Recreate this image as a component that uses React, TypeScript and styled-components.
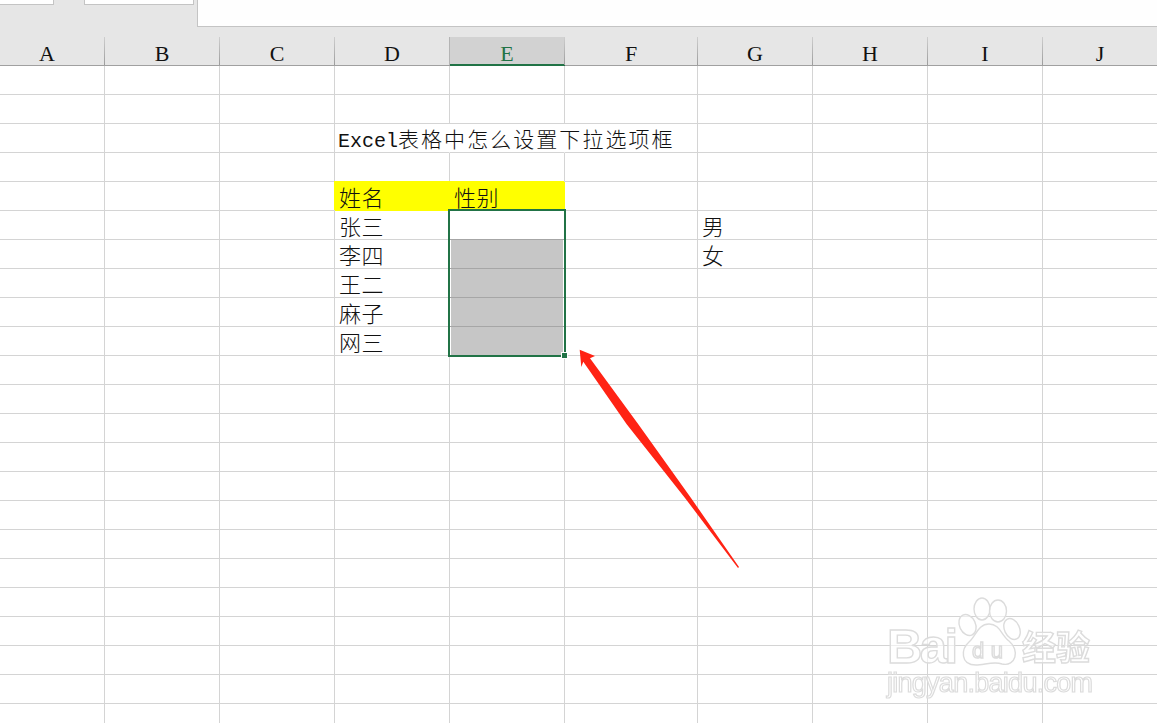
import styled, { createGlobalStyle } from 'styled-components';

const COLUMNS = [
  { label: 'A', width: 115 },
  { label: 'B', width: 115 },
  { label: 'C', width: 115 },
  { label: 'D', width: 115 },
  { label: 'E', width: 115 },
  { label: 'F', width: 133 },
  { label: 'G', width: 115 },
  { label: 'H', width: 115 },
  { label: 'I', width: 115 },
  { label: 'J', width: 115 },
];
const ROW_COUNT = 23;
const GRID_COLUMNS = COLUMNS.map((column) => `${column.width}px`).join(' ');

// keyed by "row:column", both zero based
const CELL_TEXT: Record<string, string> = {
  '4:3': '姓名',
  '4:4': '性别',
  '5:3': '张三',
  '6:3': '李四',
  '7:3': '王二',
  '8:3': '麻子',
  '9:3': '网三',
  '5:6': '男',
  '6:6': '女',
};

type CellTone = 'plain' | 'header' | 'active' | 'selected';

const getTone = (row: number, column: number): CellTone => {
  if (row === 4 && (column === 3 || column === 4)) return 'header';
  if (column === 4 && row === 5) return 'active';
  if (column === 4 && row > 5 && row < 10) return 'selected';
  return 'plain';
};

const App = (): JSX.Element => {
  const cells = [];
  for (let row = 0; row < ROW_COUNT; row++) {
    for (let column = 0; column < COLUMNS.length; column++) {
      const isTitle = row === 2 && column === 3;
      cells.push(
        <Cell
          key={`${row}-${column}`}
          $tone={getTone(row, column)}
          $hideRight={row === 2 && (column === 3 || column === 4)}
        >
          {isTitle ? (
            <Title>
              <Latin>Excel</Latin>表格中怎么设置下拉选项框
            </Title>
          ) : (
            CELL_TEXT[`${row}:${column}`]
          )}
        </Cell>,
      );
    }
  }

  return (
    <Screen>
      <GlobalStyle />
      <TabStrip>
        <FirstTab />
        <SecondTab />
        <TabPanel />
      </TabStrip>
      <HeaderRow>
        {COLUMNS.map((column) => (
          <ColumnHeader key={column.label} $active={column.label === 'E'}>
            {column.label}
          </ColumnHeader>
        ))}
      </HeaderRow>
      <Sheet>
        <Grid>{cells}</Grid>
        <Selection>
          <FillHandle />
        </Selection>
      </Sheet>
      <Arrow viewBox="0 0 170 230" aria-hidden="true">
        <polygon points="9.7,9.7 25,16 20,18.3 68.3,84.3 121,158 169,227 168,228 115,158 56.7,84.3 13.3,21.7 11.3,27" />
      </Arrow>
      <Watermark viewBox="882 595 215 105" aria-hidden="true">
        <defs>
          <filter id="soft" x="-5%" y="-5%" width="110%" height="110%">
            <feGaussianBlur stdDeviation="0.6" />
          </filter>
        </defs>
        <g filter="url(#soft)">
          <WatermarkLogo x="887" y="663" fontSize="49" textLength="71">
            Bai
          </WatermarkLogo>
          <PawPart cx="982" cy="609" rx="8" ry="11" />
          <PawPart cx="998" cy="611" rx="8.5" ry="11" />
          <PawPart cx="967.5" cy="625" rx="8" ry="11" transform="rotate(-25 967.5 625)" />
          <PawPart cx="1012" cy="629" rx="7.5" ry="11" transform="rotate(-25 1012 629)" />
          <PawPart as="path" d="M989 624 C978 624 976 636 969 642 C961 649 960 665 976 665 C984 665 994 661 1002 664 C1016 667 1020 650 1009 641 C1001 635 1000 624 989 624 Z" />
          <WatermarkSmall x="972" y="658" fontSize="22" textLength="31">
            du
          </WatermarkSmall>
          <WatermarkCjk x="1022" y="660" fontSize="34">
            经验
          </WatermarkCjk>
          <WatermarkUrl x="887" y="692" fontSize="27" textLength="206">
            jingyan.baidu.com
          </WatermarkUrl>
        </g>
      </Watermark>
    </Screen>
  );
};

const GlobalStyle = createGlobalStyle`
  html, body {
    margin: 0;
    padding: 0;
    background: #fff;
  }
`;

const Screen = styled.div`
  position: relative;
  width: 1157px;
  height: 723px;
  overflow: hidden;
  background: #fff;
  font-family: 'Noto Sans CJK SC', sans-serif;
  color: #111;
`;

const TabStrip = styled.div`
  display: flex;
  align-items: flex-start;
  height: 37px;
  background: #e6e6e6;
`;

const TabBase = styled.div`
  box-sizing: border-box;
  height: 5px;
  background: #fff;
  border-right: 1px solid #c4c4c4;
  border-bottom: 1px solid #c4c4c4;
`;

const FirstTab = styled(TabBase)`
  width: 54px;
`;

const SecondTab = styled(TabBase)`
  width: 110px;
  margin-left: 30px;
  border-left: 1px solid #c4c4c4;
`;

const TabPanel = styled.div`
  box-sizing: border-box;
  flex: 1;
  height: 27px;
  margin-left: 3px;
  background: #fefefe;
  border-left: 1px solid #c4c4c4;
  border-bottom: 1px solid #c4c4c4;
`;

const HeaderRow = styled.div`
  display: grid;
  grid-template-columns: ${GRID_COLUMNS};
  grid-template-rows: 28px;
  height: 29px;
  margin-left: -10px;
  background: #e6e6e6;
  border-bottom: 1px solid #a0a0a0;
  box-sizing: border-box;
`;

const ColumnHeader = styled.div<{ $active?: boolean }>`
  box-sizing: border-box;
  height: 28px;
  padding-top: 3px;
  text-align: center;
  font-family: 'Liberation Serif', serif;
  font-size: 22px;
  line-height: 28px;
  color: ${(props) => (props.$active ? '#217346' : '#111')};
  background: ${(props) => (props.$active ? '#d2d2d2' : 'transparent')};
  border-right: 1px solid;
  border-image: linear-gradient(#d0d0d0, #9a9a9a) 1;
  ${(props) =>
    props.$active &&
    `
    box-shadow: -1px 0 0 #b4b4b4, inset 0 -1px 0 #217346, 0 1px 0 #217346;
  `}
`;

const Sheet = styled.div`
  position: relative;
  margin-left: -10px;
`;

const Grid = styled.div`
  display: grid;
  grid-template-columns: ${GRID_COLUMNS};
  grid-auto-rows: 29px;
`;

const toneBackground: Record<CellTone, string> = {
  plain: 'transparent',
  active: 'transparent',
  header: '#ffff00',
  selected: '#c6c6c6',
};

const toneBorder: Record<CellTone, string> = {
  plain: '#d4d4d4',
  active: '#a6a6a6',
  header: '#ffff00',
  selected: '#a6a6a6',
};

const toneShadow: Record<CellTone, string> = {
  plain: 'none',
  active: 'none',
  header: '-1px -1px 0 #ffff00',
  selected: 'inset 1px 0 0 #fff, inset -1px 0 0 #fff',
};

const Cell = styled.div<{ $tone: CellTone; $hideRight?: boolean }>`
  box-sizing: border-box;
  padding: 0 0 0 4px;
  font-size: 22px;
  letter-spacing: 0.6px;
  font-weight: 300;
  line-height: 29px;
  white-space: nowrap;
  background: ${(props) => toneBackground[props.$tone]};
  border-bottom: 1px solid ${(props) => toneBorder[props.$tone]};
  border-right: 1px solid
    ${(props) => (props.$hideRight ? 'transparent' : props.$tone === 'header' ? '#ffff00' : '#d4d4d4')};
  box-shadow: ${(props) => toneShadow[props.$tone]};
`;

const Title = styled.span`
  display: block;
  margin-left: -1px;
  font-size: 21px;
  letter-spacing: 2.05px;
  line-height: 28px;
`;

const Latin = styled.span`
  font-family: 'Liberation Mono', monospace;
  font-size: 20px;
  letter-spacing: 0;
`;

const Selection = styled.div`
  position: absolute;
  box-sizing: border-box;
  left: 458px;
  top: 143px;
  width: 118px;
  height: 148px;
  border: 2px solid #217346;
`;

const FillHandle = styled.div`
  position: absolute;
  box-sizing: border-box;
  right: -4px;
  bottom: -4px;
  width: 7px;
  height: 7px;
  background: #217346;
  border: 1px solid #fff;
`;

const Arrow = styled.svg`
  position: absolute;
  left: 570px;
  top: 340px;
  width: 170px;
  height: 230px;

  polygon {
    fill: #ff2314;
  }
`;

const Watermark = styled.svg`
  position: absolute;
  left: 882px;
  top: 595px;
  width: 215px;
  height: 105px;
`;

const PawPart = styled.ellipse`
  fill: rgba(255, 255, 255, 0.55);
  stroke: #dcdcdc;
  stroke-width: 1.4;
`;

const WatermarkLogo = styled.text`
  font-family: 'Liberation Sans', sans-serif;
  font-weight: 700;
  fill: rgba(255, 255, 255, 0.6);
  stroke: #dcdcdc;
  stroke-width: 1.4;
`;

const WatermarkSmall = styled(WatermarkLogo)`
  font-weight: 400;
`;

const WatermarkCjk = styled(WatermarkLogo)`
  font-family: 'Noto Sans CJK SC', sans-serif;
`;

const WatermarkUrl = styled(WatermarkLogo)`
  font-weight: 400;
  stroke-width: 1.2;
`;

export default App;
